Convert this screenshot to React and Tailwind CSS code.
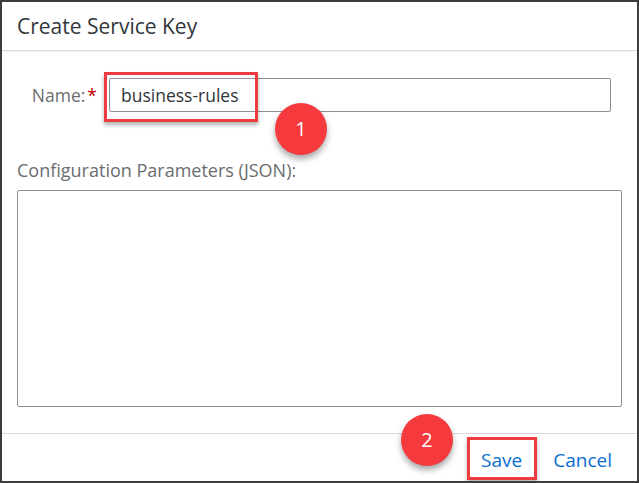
import React from "react";

const Badge = ({ n, className }) => (
  <div
    className={`absolute w-[52px] h-[52px] rounded-full bg-[#f5393d] text-white text-[20px] flex items-center justify-center shadow-[0_4px_6px_rgba(0,0,0,0.35)] ${className}`}
  >
    {n}
  </div>
);

export default function App() {
  return (
    <div
      className="relative w-[639px] h-[483px] bg-white border-2 border-[#3c3c3c] overflow-hidden flex flex-col text-[#32363a]"
      style={{ fontFamily: "'Open Sans', 'Liberation Sans', sans-serif" }}
    >
      <header className="h-[49px] shrink-0 flex items-center px-[15px] border-b border-[#d9d9d9] shadow-[0_1px_2px_rgba(0,0,0,0.06)]">
        <h1 className="text-[21px] leading-[28px] text-[#32363a]">Create Service Key</h1>
      </header>

      <main className="flex-1 flex flex-col px-[15px]">
        <div className="flex items-center mt-[27px] h-[34px]">
          <label className="w-[92px] text-right pr-[12px] text-[17.5px] text-[#6a6d70] whitespace-nowrap">
            Name:<span className="text-[#bb0000] ml-[2px]">*</span>
          </label>
          <div className="w-[502px] h-[34px] border border-[#89919a] rounded-[2px] flex items-center px-[11px] text-[17.5px] text-[#32363a]">
            business-rules
          </div>
        </div>

        <div className="mt-[47px] text-[18px] text-[#6a6d70] leading-[22px]">
          Configuration Parameters (JSON):
        </div>
        <div className="mt-[9px] w-[605px] h-[217px] border border-[#89919a] rounded-[2px]" />
      </main>

      <footer className="h-[48px] shrink-0 border-t border-[#d9d9d9] flex items-center justify-end gap-[31px] pr-[25px] text-[19px] text-[#0a6ed1] pt-[6px]">
        <span>Save</span>
        <span>Cancel</span>
      </footer>

      <div className="absolute left-[102px] top-[70px] w-[154px] h-[50px] border-[3px] border-[#ee3b3f] shadow-[0_3px_4px_rgba(0,0,0,0.3)]" />
      <div className="absolute left-[465px] top-[435px] w-[70px] h-[43px] border-[3px] border-[#ee3b3f] shadow-[0_3px_4px_rgba(0,0,0,0.3)]" />

      <Badge n="1" className="left-[273px] top-[101px]" />
      <Badge n="2" className="left-[399px] top-[412px]" />
    </div>
  );
}
